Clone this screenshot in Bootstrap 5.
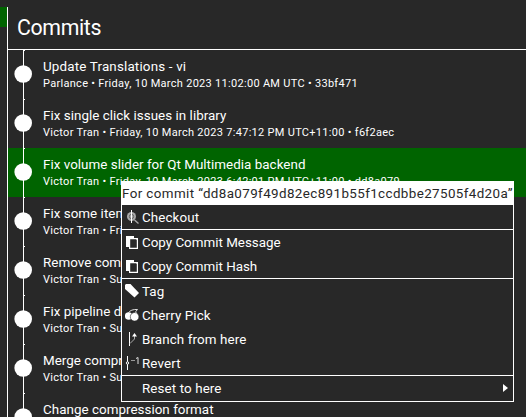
<!DOCTYPE html>
<html lang="en">
<head>
<meta charset="utf-8">
<title>Commits</title>
<link href="https://cdn.jsdelivr.net/npm/bootstrap@5.3.0/dist/css/bootstrap.min.css" rel="stylesheet">
<style>
body{background:#282828;color:#fff;font-family:Roboto,"Noto Sans",sans-serif;font-size:13.4px;width:526px;height:417px}
.wrap{padding-top:7px}
.side{width:7px;flex:none}
.side-sel{height:20px;background:#006400}
.pane{border-left:1px solid #fff}
.head{height:43px;border-bottom:1px solid #fff;font-size:21.3px;line-height:42px;padding-left:9px;letter-spacing:-.35px;flex:none}
.commit{height:49px;flex:none}
.commit.active{background:#006400}
.rail{width:35px;flex:none}
.rail svg{display:block}
.subject{line-height:18px;padding-top:8px;letter-spacing:.03px}
.meta{font-size:11px;line-height:15px;letter-spacing:.295px}
.ctx{left:121px;top:181px;width:393px;height:221px;border:1px solid #fff;background:#282828}
.ctx-head{height:23px;line-height:24px;background:#fff;color:#282828;letter-spacing:.39px}
.ctx-item{height:24px;line-height:24px;padding-right:5px;letter-spacing:.1px}
.ctx-item span{position:relative;top:1px}
.ctx-item svg{flex:none}
.ctx-item .ico{width:14px;height:16px;margin:0 3px}
.ctx-item .tight{letter-spacing:-.01px}
.sep{height:1px;background:#fff}
</style>
<script src="https://cdn.jsdelivr.net/npm/bootstrap@5.3.0/dist/js/bootstrap.bundle.min.js"></script>
</head>
<body class="overflow-hidden position-relative">
<svg width="0" height="0" class="position-absolute"><defs>
<g id="node"><path d="M15 0h1v49h-1zM16 0h1v1h-1z" fill="#fff"/><circle cx="15.2" cy="24" r="8.8" fill="#fff"/></g>
<g id="copy"><path d="M1 2h8v11H1z" fill="#fff"/><path d="M4.6 4.6h7.8v9.8H4.6z" fill="#282828" stroke="#fff" stroke-width="1.2"/><path d="M10 4h3v3z" fill="#fff"/></g>
</defs></svg>
<div class="wrap d-flex h-100">
  <div class="side"><div class="side-sel"></div></div>
  <main class="pane flex-grow-1 d-flex flex-column text-nowrap overflow-hidden">
    <div class="head"><span>Commits</span></div>
    <div class="commit d-flex"><div class="rail"><svg width="31" height="49"><use href="#node"/></svg></div><div><div class="subject" style="letter-spacing:.17px">Update Translations - vi</div><div class="meta">Parlance • Friday, 10 March 2023 11:02:00 AM UTC • 33bf471</div></div></div>
    <div class="commit d-flex"><div class="rail"><svg width="31" height="49"><use href="#node"/></svg></div><div><div class="subject">Fix single click issues in library</div><div class="meta">Victor Tran • Friday, 10 March 2023 7:47:12 PM UTC+11:00 • f6f2aec</div></div></div>
    <div class="commit active d-flex"><div class="rail"><svg width="31" height="49"><use href="#node"/></svg></div><div><div class="subject">Fix volume slider for Qt Multimedia backend</div><div class="meta">Victor Tran • Friday, 10 March 2023 6:42:01 PM UTC+11:00 • dd8a079</div></div></div>
    <div class="commit d-flex"><div class="rail"><svg width="31" height="49"><use href="#node"/></svg></div><div><div class="subject">Fix some item</div><div class="meta">Victor Tran • Fri</div></div></div>
    <div class="commit d-flex"><div class="rail"><svg width="31" height="49"><use href="#node"/></svg></div><div><div class="subject">Remove com</div><div class="meta">Victor Tran • Su</div></div></div>
    <div class="commit d-flex"><div class="rail"><svg width="31" height="49"><use href="#node"/></svg></div><div><div class="subject">Fix pipeline d</div><div class="meta">Victor Tran • Su</div></div></div>
    <div class="commit d-flex"><div class="rail"><svg width="31" height="49"><use href="#node"/></svg></div><div><div class="subject">Merge compr</div><div class="meta">Victor Tran • Su</div></div></div>
    <div class="commit d-flex"><div class="rail"><svg width="31" height="49"><use href="#node"/></svg></div><div><div class="subject">Change compression format</div></div></div>
  </main>
</div>
<div class="ctx position-absolute text-nowrap">
  <div class="ctx-head"><span>For commit “dd8a079f49d82ec891b55f1ccdbbe27505f4d20a”</span></div>
  <div class="ctx-item d-flex align-items-center"><svg class="ico" viewBox="0 0 14 16"><circle cx="6.5" cy="7.5" r="4.5" fill="#aaa"/><circle cx="6.5" cy="7.5" r="2.2" fill="none" stroke="#666"/><path d="M9.5 11l4 3.5" stroke="#aaa" stroke-width="1.4"/><path d="M6.5 1v13" stroke="#fff"/></svg><span>Checkout</span></div>
  <div class="sep"></div>
  <div class="ctx-item d-flex align-items-center"><svg class="ico" viewBox="0 0 14 16"><use href="#copy"/></svg><span class="tight">Copy Commit Message</span></div>
  <div class="ctx-item d-flex align-items-center"><svg class="ico" viewBox="0 0 14 16"><use href="#copy"/></svg><span class="tight">Copy Commit Hash</span></div>
  <div class="sep"></div>
  <div class="ctx-item d-flex align-items-center"><svg class="ico" viewBox="0 0 14 16"><path d="M0 2l1-1h4.5L14 10l-4.5 4.5L0 6z" fill="#fff"/></svg><span>Tag</span></div>
  <div class="ctx-item d-flex align-items-center"><svg class="ico" viewBox="0 0 14 16"><g fill="#fff"><circle cx="3.6" cy="9" r="3.7"/><circle cx="9.6" cy="9.8" r="4.3" stroke="#282828" stroke-width=".6"/></g><path d="M3 6Q6 2 12.5 2.5Q10 4 11 7" stroke="#ddd" fill="none"/></svg><span>Cherry Pick</span></div>
  <div class="ctx-item d-flex align-items-center"><svg class="ico" viewBox="0 0 14 16"><path d="M4.5 1v14" stroke="#fff"/><path d="M5 12.5L9.5 8V3" stroke="#aaa" fill="none"/><path d="M7 5.5L9.5 2 12 5.5z" fill="#fff"/></svg><span>Branch from here</span></div>
  <div class="ctx-item d-flex align-items-center"><svg class="ico" viewBox="0 0 14 16"><path d="M2.5 1v14" stroke="#fff"/><circle cx="2.5" cy="8" r="1.2" fill="#282828" stroke="#fff"/><path d="M6 5.5h4" stroke="#999"/><path d="M11 3.5l2-1V9" stroke="#ddd" fill="none"/></svg><span>Revert</span></div>
  <div class="sep"></div>
  <div class="ctx-item d-flex align-items-center"><span class="ico"></span><span class="me-auto">Reset to here</span><svg width="5" height="8"><path d="M0 0l5 4-5 4z" fill="#fff"/></svg></div>
</div>
</body>
</html>
